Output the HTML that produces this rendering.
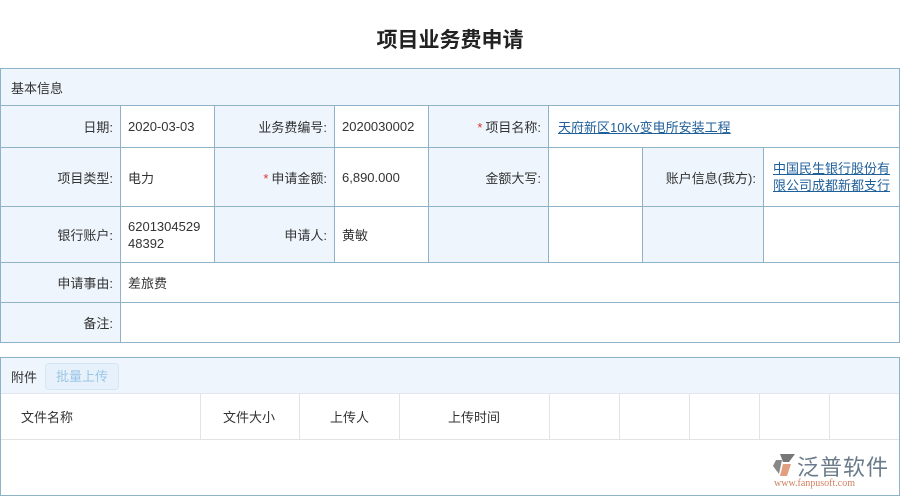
<!DOCTYPE html>
<html><head><meta charset="utf-8"><style>
*{margin:0;padding:0;box-sizing:border-box}
body{width:900px;height:498px;background:#fff;font-family:"Liberation Sans","Noto Sans CJK SC",sans-serif;font-size:13px;color:#333;position:relative;overflow:hidden}
.a{position:absolute}
table.f{position:absolute;left:0;top:68px;width:899px;border-collapse:collapse;table-layout:fixed}
table.f td{border:1px solid #8fb2c9;padding:0 7px;vertical-align:middle}
td.l{background:#eef5fc;text-align:right;padding-right:8px}
.s{color:#d33;margin-right:3px}
a{color:#1f5f9a;text-decoration:underline}
.th{position:absolute;top:394px;height:45px;border-right:1px solid #e3e3e3;display:flex;align-items:center;font-size:13px;color:#333}
</style></head><body>
<div class="a" style="left:0;top:24px;width:900px;text-align:center;font-size:21px;font-weight:bold;color:#222">项目业务费申请</div>

<table class="f">
<colgroup><col style="width:120px"><col style="width:94px"><col style="width:120px"><col style="width:94px"><col style="width:120px"><col style="width:94px"><col style="width:121px"><col style="width:136px"></colgroup>
<tr style="height:37px"><td colspan="8" class="l" style="text-align:left;padding-left:10px">基本信息</td></tr>
<tr style="height:42px"><td class="l">日期:</td><td>2020-03-03</td><td class="l">业务费编号:</td><td>2020030002</td><td class="l"><span class="s">*</span>项目名称:</td><td colspan="3" style="padding-left:9px"><a>天府新区10Kv变电所安装工程</a></td></tr>
<tr style="height:59px"><td class="l">项目类型:</td><td>电力</td><td class="l"><span class="s">*</span>申请金额:</td><td>6,890.000</td><td class="l">金额大写:</td><td></td><td class="l">账户信息(我方):</td><td style="padding-left:9px;line-height:17px"><a>中国民生银行股份有限公司成都新都支行</a></td></tr>
<tr style="height:56px"><td class="l">银行账户:</td><td style="line-height:17px"><div style="width:76px;word-break:break-all">620130452948392</div></td><td class="l">申请人:</td><td>黄敏</td><td class="l"></td><td></td><td class="l"></td><td></td></tr>
<tr style="height:40px"><td class="l">申请事由:</td><td colspan="7">差旅费</td></tr>
<tr style="height:40px"><td class="l">备注:</td><td colspan="7"></td></tr>
</table>

<div class="a" style="left:0;top:357px;width:900px;height:139px;border:1px solid #8fb2c9"></div>
<div class="a" style="left:1px;top:358px;width:898px;height:36px;background:#eef5fc;border-bottom:1px solid #e0e6ec"></div>
<div class="a" style="left:11px;top:367px">附件</div>
<div class="a" style="left:45px;top:363px;width:74px;height:27px;border:1px solid #d5e6f3;border-radius:4px;background:#e6f1fb;color:#9cc6e6;text-align:center;line-height:25px">批量上传</div>
<div class="th" style="left:1px;width:200px;padding-left:20px">文件名称</div>
<div class="th" style="left:200px;width:100px;padding-left:23px">文件大小</div>
<div class="th" style="left:300px;width:100px;padding-left:30px">上传人</div>
<div class="th" style="left:400px;width:150px;padding-left:48px">上传时间</div>
<div class="th" style="left:550px;width:70px"></div>
<div class="th" style="left:620px;width:70px"></div>
<div class="th" style="left:690px;width:70px"></div>
<div class="th" style="left:760px;width:70px"></div>
<div class="a" style="left:1px;top:439px;width:898px;border-top:1px solid #e3e3e3"></div>

<svg class="a" style="left:771px;top:452px" width="26" height="26" viewBox="0 0 26 26"><path d="M9 2 L24 2 L18 10 L12 10 Z" fill="#777"/><path d="M5 8 L11 8 L8 22 L2 14 Z" fill="#888"/><path d="M12 12 L20 12 L16 24 L9 24 Z" fill="#e0a080"/></svg>
<div class="a" style="left:797px;top:450px;font-size:22px;color:#6a7a8a;letter-spacing:1px">泛普软件</div>
<div class="a" style="left:774px;top:478px;font-size:10px;color:#d08060;font-family:'Liberation Serif',serif">www.fanpusoft.com</div>
</body></html>
